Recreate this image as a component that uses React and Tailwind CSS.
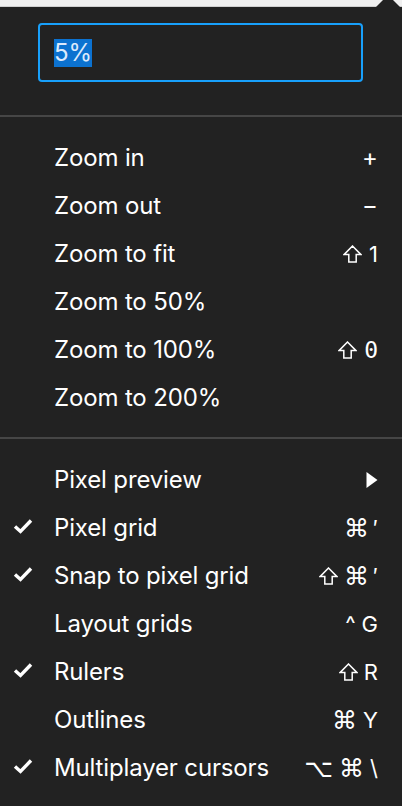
import { Fragment } from "react";

const Shift = () => (
  <svg width="19" height="18" viewBox="0 0 19 18" fill="none" className="block">
    <path d="M9.5 1 L18 9.6 H13.2 V17 H5.8 V9.6 H1 Z" stroke="#ffffff" strokeWidth="1.5" strokeLinejoin="miter" />
  </svg>
);

const Check = () => (
  <svg width="20" height="16" viewBox="0 0 20 16" className="block">
    <path d="M2 8.5 L7.5 13.5 L18 2.5" stroke="#ffffff" strokeWidth="3.4" fill="none" strokeLinecap="butt" />
  </svg>
);

const Play = () => (
  <svg width="12" height="16" viewBox="0 0 12 16" className="block">
    <path d="M0.5 0 L11.5 8 L0.5 16 Z" fill="#ffffff" />
  </svg>
);

const sym = "font-['DejaVu_Sans',sans-serif] text-[25px]";

const zoomItems = [
  { label: "Zoom in", keys: [<span key="a" className="text-[24px]">+</span>] },
  { label: "Zoom out", keys: [<span key="a" className="text-[24px]">−</span>] },
  { label: "Zoom to fit", keys: [<Shift key="s" />, <span key="a" className="ml-[1px]">1</span>] },
  { label: "Zoom to 50%" },
  { label: "Zoom to 100%", keys: [<Shift key="s" />, <span key="a" className="ml-[1px] slashed-zero font-['DejaVu_Sans_Mono',monospace] text-[23px]">0</span>] },
  { label: "Zoom to 200%" },
];

const viewItems = [
  { label: "Pixel preview", keys: [<Play key="p" />] },
  { label: "Pixel grid", checked: true, keys: [<span key="c" className={sym}>⌘</span>, <span key="q" className="-ml-[2px]">′</span>] },
  { label: "Snap to pixel grid", checked: true, keys: [<Shift key="s" />, <span key="c" className={sym}>⌘</span>, <span key="q" className="-ml-[2px]">′</span>] },
  { label: "Layout grids", keys: [<span key="c">^</span>, <span key="g">G</span>] },
  { label: "Rulers", checked: true, keys: [<Shift key="s" />, <span key="r">R</span>] },
  { label: "Outlines", keys: [<span key="c" className={sym}>⌘</span>, <span key="y">Y</span>] },
  { label: "Multiplayer cursors", checked: true, keys: [<span key="o" className={sym}>⌥</span>, <span key="c" className={sym}>⌘</span>, <span key="b">\</span>] },
];

const MenuRow = ({ item }) => (
  <div className="flex h-12 items-center pr-6 pt-[2px]">
    <div className="w-[54px] pl-[13px] -mt-[4px]">{item.checked && <Check />}</div>
    <span className="flex-1 text-[24px] leading-none tracking-[-0.15px] text-white">{item.label}</span>
    {item.keys && (
      <div className="flex items-center gap-[6px] text-[22px] leading-none text-white">
        {item.keys.map((k, i) => (
          <Fragment key={i}>{k}</Fragment>
        ))}
      </div>
    )}
  </div>
);

export default function App() {
  return (
    <div className="relative h-[806px] w-[402px] overflow-hidden bg-[#222222] font-['Inter',sans-serif] antialiased">
      {/* strip above the popover */}
      <div className="h-[7px] border-b border-[#d0d0d0] bg-[#f0f0f0]" />
      <svg width="40" height="9" viewBox="0 0 40 9" className="absolute right-0 top-0">
        <path d="M26 -5 L39 8 L13 8 Z" fill="#222222" />
      </svg>

      <div className="pl-[38px] pr-[39px] pt-4">
        <div className="flex h-[59px] items-center rounded-[4px] border-2 border-[#18a0fb] px-[14px]">
          <span className="bg-[#0c72d0] text-[24px] leading-[28px] tracking-[-0.15px] text-[#dceafc]">5%</span>
        </div>
      </div>

      <div className="mt-[33px] h-[2px] bg-[#464646]" />
      <div className="py-4">
        {zoomItems.map((it) => (
          <MenuRow key={it.label} item={it} />
        ))}
      </div>
      <div className="h-[2px] bg-[#464646]" />
      <div className="pt-4">
        {viewItems.map((it) => (
          <MenuRow key={it.label} item={it} />
        ))}
      </div>
    </div>
  );
}
